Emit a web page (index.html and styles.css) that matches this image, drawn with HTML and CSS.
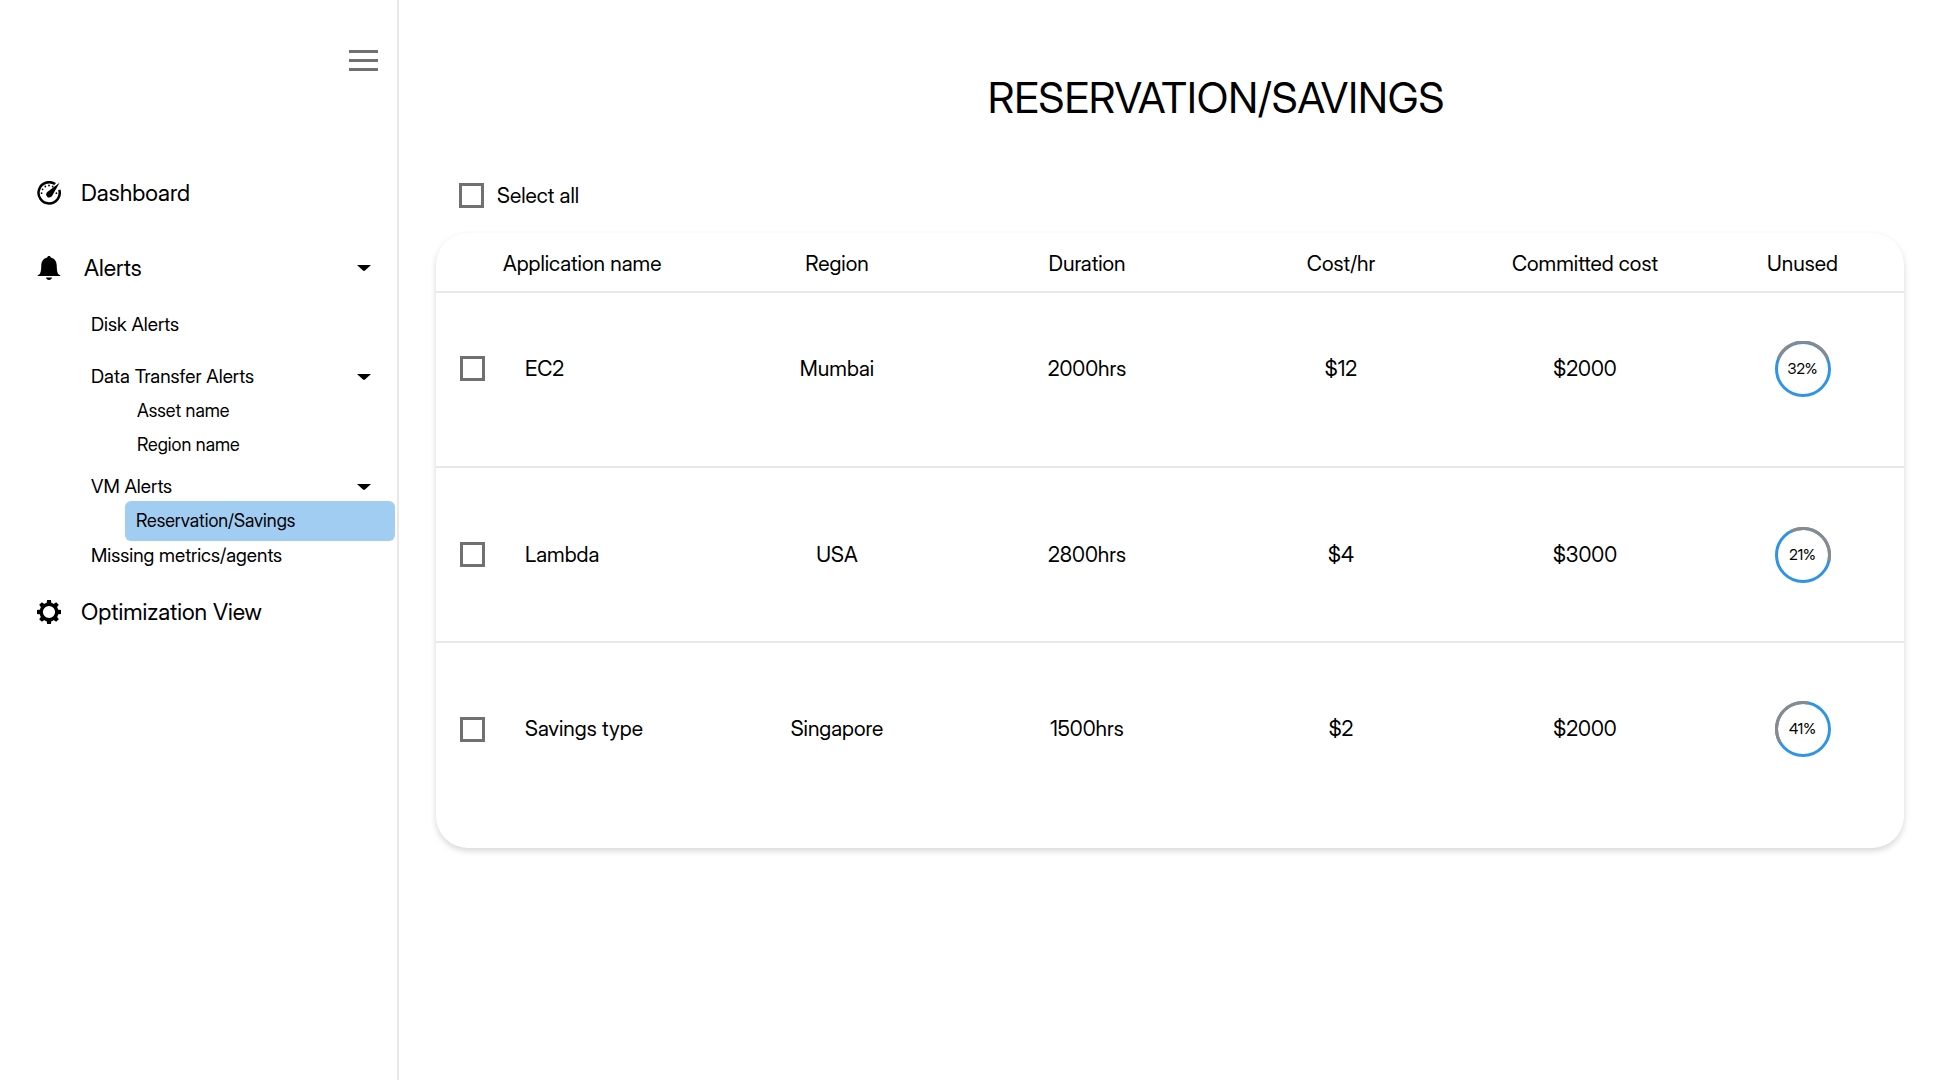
FILE: index.html
```html
<!DOCTYPE html>
<html lang="en">
<head>
<meta charset="utf-8">
<meta name="viewport" content="width=device-width, initial-scale=1">
<title>Reservation/Savings</title>
<link rel="stylesheet" href="styles.css">
</head>
<body>
<div class="app">
  <aside class="sidebar">
    <button class="menu-button" type="button" aria-label="Toggle menu">
      <svg width="29" height="21" viewBox="0 0 29 21" fill="#707070"><path d="M0 0h29v3H0zM0 9h29v3H0zM0 18h29v3H0z"/></svg>
    </button>
    <nav class="nav" aria-label="Main">
      <a class="nav-main" href="#">
        <svg class="nav-icon" viewBox="0 0 24 24">
          <path d="M18.2 3.1A10.6 10.6 0 1 0 22.3 8.8" fill="none" stroke="#000" stroke-width="2.5"/>
          <path d="M22.6 1.8L14.9 15.3A3.2 3.2 0 1 1 10.3 10.9z" fill="#000"/>
          <g fill="#000"><circle cx="4.6" cy="12.2" r=".9"/><circle cx="5.6" cy="8.3" r=".9"/><circle cx="8.3" cy="5.5" r=".9"/><circle cx="12" cy="4.5" r=".9"/><circle cx="15.7" cy="5.5" r=".9"/><circle cx="19.4" cy="12.2" r=".9"/></g>
        </svg>
        <span>Dashboard</span>
      </a>
      <a class="nav-main nav-alerts" href="#">
        <svg class="nav-icon" viewBox="0 0 24 24"><path d="M12 0c1 0 1.6.6 1.7 1.4C17.600 2.300 19.500 5 19.700 9c.2 4.500.3 8.200 2.100 9.500.8.500 1.700.700 1.700 1.500H.5c0-.8.9-1 1.700-1.500C4 17.200 4.100 13.500 4.300 9c.2-4 2.100-6.700 6-7.600C10.400.6 11 0 12 0zM9 21.500h6c-.2 1.500-1.400 2.500-3 2.500s-2.800-1-3-2.500z"/></svg>
        <span>Alerts</span>
        <svg class="caret" viewBox="0 0 14 6"><path d="M0 0h14L8 5.500q-1 .8-2 0z"/></svg>
      </a>
      <div class="nav-group">
        <a class="nav-sub" href="#">Disk Alerts</a>
        <a class="nav-sub" href="#">Data Transfer Alerts
          <svg class="caret" viewBox="0 0 14 6"><path d="M0 0h14L8 5.500q-1 .8-2 0z"/></svg></a>
        <a class="nav-leaf" href="#">Asset name</a>
        <a class="nav-leaf" href="#">Region name</a>
        <a class="nav-sub nav-vm" href="#">VM Alerts
          <svg class="caret" viewBox="0 0 14 6"><path d="M0 0h14L8 5.500q-1 .8-2 0z"/></svg></a>
        <a class="nav-leaf nav-active" href="#" aria-current="page">Reservation/Savings</a>
        <a class="nav-sub nav-last" href="#">Missing metrics/agents</a>
      </div>
      <a class="nav-main" href="#">
        <svg class="nav-icon" viewBox="0 0 24 24">
          <circle cx="12" cy="12" r="7.800" fill="none" stroke="#000" stroke-width="3.400"/>
          <path d="M9.500 4L10.100 0h3.800l.6 4z"/><path d="M9.500 4L10.100 0h3.800l.6 4z" transform="rotate(45 12 12)"/><path d="M9.500 4L10.100 0h3.800l.6 4z" transform="rotate(90 12 12)"/><path d="M9.500 4L10.100 0h3.800l.6 4z" transform="rotate(135 12 12)"/><path d="M9.500 4L10.100 0h3.800l.6 4z" transform="rotate(180 12 12)"/><path d="M9.500 4L10.100 0h3.800l.6 4z" transform="rotate(225 12 12)"/><path d="M9.500 4L10.100 0h3.800l.6 4z" transform="rotate(270 12 12)"/><path d="M9.500 4L10.100 0h3.800l.6 4z" transform="rotate(315 12 12)"/>
        </svg>
        <span>Optimization View</span>
      </a>
    </nav>
  </aside>
  <main class="main">
    <h1 class="title">RESERVATION/SAVINGS</h1>
    <label class="select-all"><input class="check" type="checkbox">Select all</label>
    <div class="card">
      <table class="table">
        <colgroup><col class="c-check"><col class="c-name"><col class="c-region"><col class="c-duration"><col class="c-cost"><col class="c-committed"><col class="c-unused"></colgroup>
        <thead>
          <tr><td></td><th class="name-head" scope="col">Application name</th><th scope="col">Region</th><th scope="col">Duration</th><th scope="col">Cost/hr</th><th scope="col">Committed cost</th><th scope="col">Unused</th></tr>
        </thead>
        <tbody>
          <tr class="row-first">
            <td class="check-cell"><input class="check" type="checkbox" aria-label="Select EC2"></td>
            <td class="name">EC2</td><td>Mumbai</td><td>2000hrs</td><td>$12</td><td>$2000</td>
            <td><div class="ring"><svg viewBox="0 0 56 56"><circle class="ring-base" cx="28" cy="28" r="26.500"/><path class="ring-part" d="M3.200 18A26.500 26.500 0 0 1 52.800 18"/></svg><span>32%</span></div></td>
          </tr>
          <tr>
            <td class="check-cell"><input class="check" type="checkbox" aria-label="Select Lambda"></td>
            <td class="name">Lambda</td><td>USA</td><td>2800hrs</td><td>$4</td><td>$3000</td>
            <td><div class="ring"><svg viewBox="0 0 56 56"><circle class="ring-base" cx="28" cy="28" r="26.500"/><path class="ring-part" d="M16 4.300A26.500 26.500 0 0 1 53.800 34"/></svg><span>21%</span></div></td>
          </tr>
          <tr class="row-last">
            <td class="check-cell"><input class="check" type="checkbox" aria-label="Select Savings type"></td>
            <td class="name">Savings type</td><td>Singapore</td><td>1500hrs</td><td>$2</td><td>$2000</td>
            <td><div class="ring"><svg viewBox="0 0 56 56"><circle class="ring-base" cx="28" cy="28" r="26.500"/><path class="ring-part" d="M5 41.200A26.500 26.500 0 0 1 33.400 2.100"/></svg><span>41%</span></div></td>
          </tr>
        </tbody>
      </table>
    </div>
  </main>
</div>
</body>
</html>
```
FILE: styles.css
```css
* { box-sizing: border-box; }

body {
  margin: 0;
  background: #fff;
  color: #000;
  font-family: "Inter Display", Inter, "Liberation Sans", sans-serif;
  font-variation-settings: "opsz" 32;
  font-size: 21px;
  line-height: 24px;
}

a { color: inherit; text-decoration: none; }

.app { display: flex; min-height: 100vh; }

.sidebar {
  flex: none;
  width: 399px;
  padding-top: 50px;
  border-right: 2px solid #e8e8e8;
}

.menu-button {
  display: block;
  margin: 0 19px 0 auto;
  padding: 0;
  border: 0;
  background: none;
}

.menu-button svg { display: block; }

.nav { margin-top: 106px; }

.nav-main {
  display: flex;
  align-items: center;
  gap: 20px;
  height: 32px;
  padding: 0 26px 0 37px;
  font-size: 23px;
}

.nav-alerts { gap: 23px; margin-top: 43px; }

.nav-icon { flex: none; width: 24px; height: 24px; }

.caret { flex: none; width: 14px; height: 6px; margin-left: auto; }

.nav-group { margin: 29px 0 28px; font-size: 19px; }

.nav-sub {
  display: flex;
  align-items: center;
  padding: 0 26px 0 91px;
}

.nav-sub + .nav-sub { margin-top: 28px; }

.nav-leaf { display: block; margin-top: 10px; padding-left: 137px; font-size: 18px; }

.nav-vm { margin-top: 18px; }

.nav-active {
  margin: 2px 2px 2px 125px;
  padding: 8px 11px;
  border-radius: 6px;
  background: #a2cdf3;
}

.nav-last { margin-top: 3px; }

.main { flex: 1; min-width: 0; padding: 74px 40px 40px 37px; }

.title {
  margin: 0;
  padding-left: 92px;
  font-size: 42px;
  font-weight: 400;
  line-height: 48px;
  text-align: center;
}

.select-all {
  display: flex;
  align-items: center;
  gap: 13px;
  width: max-content;
  margin: 61px 0 25px 23px;
}

.check {
  appearance: none;
  display: block;
  width: 25px;
  height: 25px;
  margin: 0;
  border: 3px solid #707070;
  background: #fff;
}

.check:checked { background: #2f94e6; }

.card {
  border-radius: 32px;
  background: #fff;
  box-shadow: 0 3px 6px rgba(0, 0, 0, 0.16);
}

.table {
  width: 100%;
  border-collapse: separate;
  border-spacing: 0;
  table-layout: fixed;
}

.c-check { width: 67px; }
.c-name { width: 210px; }
.c-region { width: 248px; }
.c-duration { width: 252px; }
.c-cost { width: 256px; }
.c-committed { width: 232px; }
.c-unused { width: 203px; }

.table th,
.table td { padding: 0; font-weight: 400; text-align: center; }

.table thead th { height: 60px; padding-top: 3px; }

.table thead th,
.table thead td,
.table tbody tr:not(.row-last) td { border-bottom: 2px solid #e8e8e8; }

.table tbody td { height: 175px; }
.table .row-first td { padding-bottom: 22px; }
.table .row-last td { height: 205px; padding-bottom: 33px; }

.table .check-cell { padding-left: 24px; }
.table .name-head { text-align: left; }
.table .name { padding-left: 22px; text-align: left; }

.ring {
  display: grid;
  place-items: center;
  width: 56px;
  height: 56px;
  margin: 0 auto;
  font-size: 15px;
}

.ring svg,
.ring span { grid-area: 1 / 1; }

.ring-base,
.ring-part { fill: none; stroke-width: 3; }
.ring-base { stroke: #2f94e6; }
.ring-part { stroke: #8a8a8a; }
```
